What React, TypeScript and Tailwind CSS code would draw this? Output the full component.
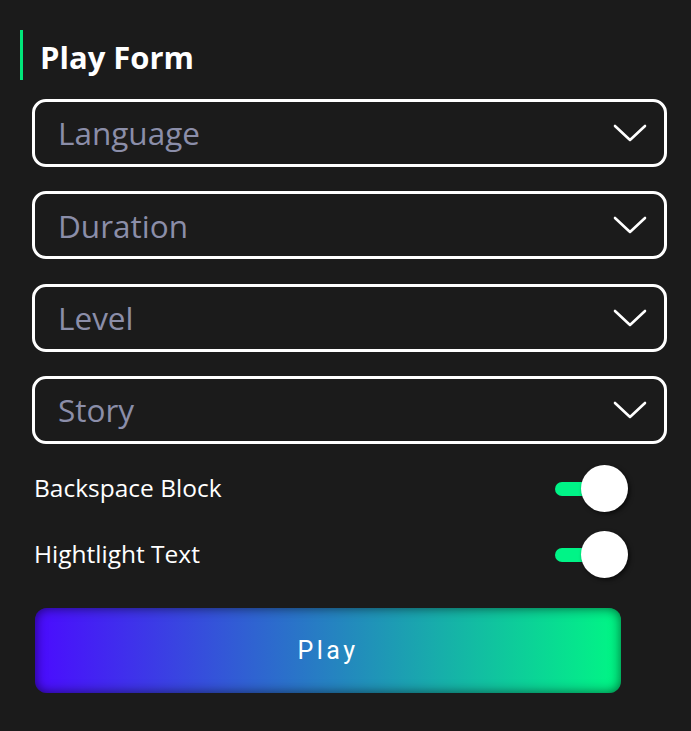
function Chevron() {
  return (
    <svg width="34" height="18" viewBox="0 0 34 18" fill="none" className="shrink-0">
      <path d="M2 2l15 14L32 2" stroke="white" strokeWidth="2.6" strokeLinecap="round" strokeLinejoin="round" />
    </svg>
  )
}

function SelectBox({ label }: { label: string }) {
  return (
    <div className="flex h-[68px] items-center justify-between rounded-[14px] border-[3px] border-white pr-[17px] pl-[23px]">
      <span className="text-[31.5px] leading-none text-[#8b8ea9]">{label}</span>
      <Chevron />
    </div>
  )
}

function Toggle() {
  return (
    <div className="relative h-[47px] w-[73px]">
      <span className="absolute top-[17px] left-0 h-[14px] w-[40px] rounded-full bg-[#00f487]" />
      <span className="absolute top-0 right-0 h-[47px] w-[47px] rounded-full bg-white shadow-[2px_2px_4px_rgba(0,0,0,0.6)]" />
    </div>
  )
}

function ToggleRow({ label }: { label: string }) {
  return (
    <div className="flex h-[47px] w-[594px] items-center justify-between">
      <span className="text-[24.5px] leading-none text-white">{label}</span>
      <Toggle />
    </div>
  )
}

export default function App() {
  return (
    <div
      className="min-h-screen bg-[#1b1b1b] px-[20px] pt-[30px] pb-[38px]"
      style={{ fontFamily: '"Open Sans", "Noto Sans", sans-serif' }}
    >
      {/* Title */}
      <div className="flex h-[50px] items-center border-l-[3px] border-[#00e67a] pt-[4px] pl-[17px]">
        <h1 className="text-[31px] leading-none font-bold text-white">Play Form</h1>
      </div>

      {/* Selects */}
      <div className="mt-[19px] ml-[12px] flex w-[635px] flex-col gap-[24.3px]">
        <SelectBox label="Language" />
        <SelectBox label="Duration" />
        <SelectBox label="Level" />
        <SelectBox label="Story" />
      </div>

      {/* Toggles */}
      <div className="mt-[21px] ml-[14px] flex flex-col gap-[19px]">
        <ToggleRow label="Backspace Block" />
        <ToggleRow label="Hightlight Text" />
      </div>

      {/* Play button */}
      <button
        className="mt-[30px] ml-[15px] flex h-[85px] w-[586px] items-center justify-center rounded-[12px] bg-[linear-gradient(to_right,#4b0bff,#00f784)] text-[25px] tracking-[3.5px] text-white shadow-[inset_0_0_12px_rgba(0,0,0,0.6)]"
        style={{ fontFamily: 'Roboto, "Liberation Sans", sans-serif' }}
      >
        Play
      </button>
    </div>
  )
}
